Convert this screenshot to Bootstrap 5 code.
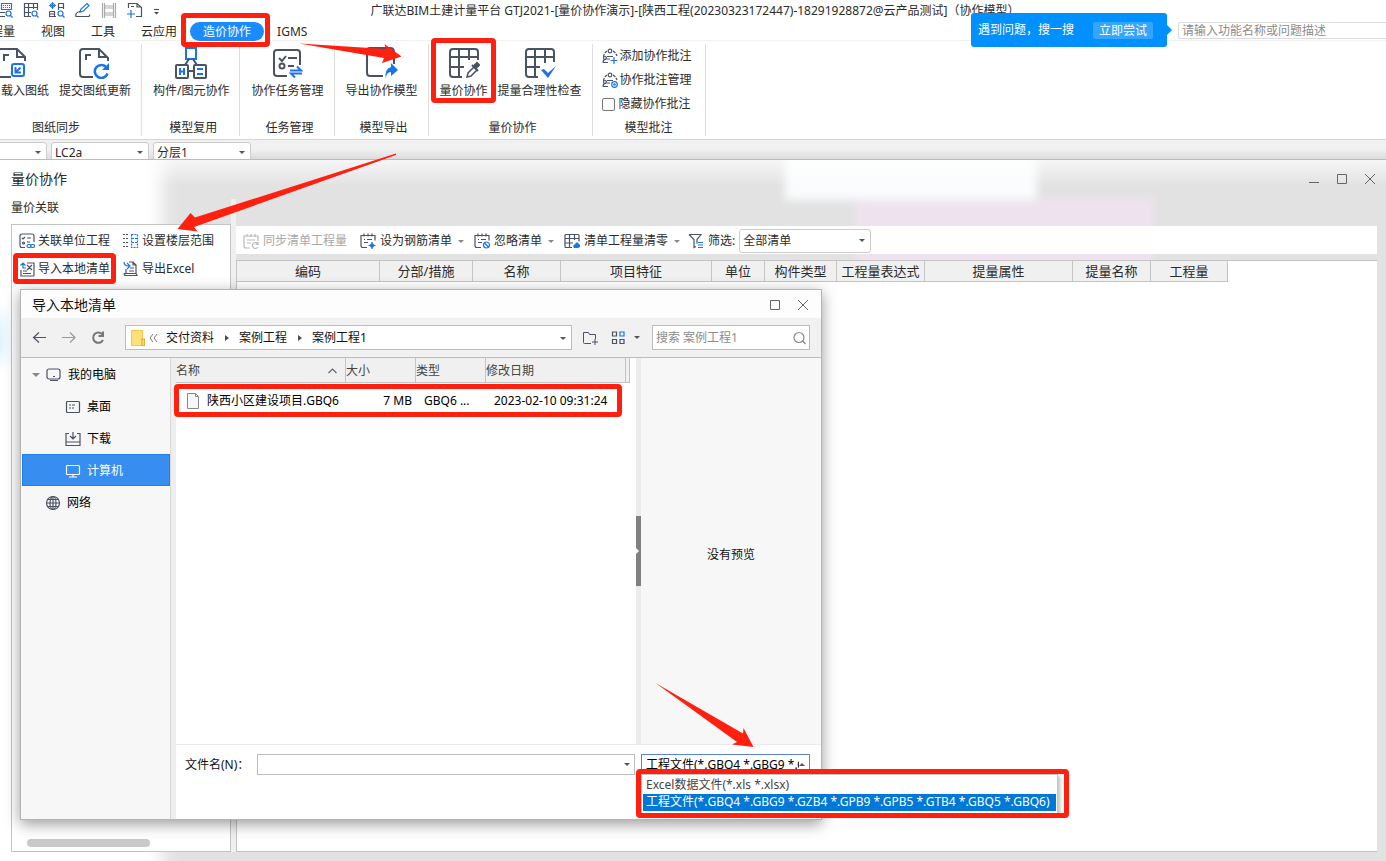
<!DOCTYPE html>
<html lang="zh-CN">
<head>
<meta charset="utf-8">
<meta name="viewport" content="width=device-width, initial-scale=1">
<title>量价协作</title>
<link href="https://cdn.jsdelivr.net/npm/bootstrap@5.3.0/dist/css/bootstrap.min.css" rel="stylesheet">
<style>
  :root { --red: #ff2010; --line: #bcbcbc; --ink: #2b2b2b; --slate: #4a5266; --blue: #1a73e8; }
  body { font: 12px/16px "Noto Sans", "Noto Sans CJK SC", sans-serif; color: var(--ink); background: #fff; overflow: hidden; }
  svg { display: block; flex: none; fill: none; stroke: var(--slate); stroke-width: 1.2; }
  svg .b { stroke: var(--blue); }
  svg .bf { fill: var(--blue); stroke: none; }
  button { font: inherit; color: inherit; background: none; border: 0; padding: 0; white-space: nowrap; }
  input, select { font: inherit; color: inherit; }
  .i16 { width: 16px; height: 16px; }
  .i32 { width: 32px; height: 32px; stroke-width: 2; }
  .caret { width: 0; height: 0; border: 3px solid transparent; border-top-color: #555; border-bottom: 0; flex: none; }

  /* red annotation frames */
  .marked { position: relative; }
  .marked::after { content: ""; position: absolute; border: 5px solid var(--red); border-radius: 4px; pointer-events: none; z-index: 5; }
  .arrows { position: absolute; left: 0; top: 0; width: 1386px; height: 861px; z-index: 30; pointer-events: none; fill: var(--red); stroke: none; }

  .title-row { display: grid; grid-template-columns: 1fr auto 1fr; height: 22px; align-items: center; }
  .quick { gap: 10px; margin-left: -3px; padding-bottom: 3px; }
  .tab-row { height: 19px; border-bottom: 1px solid #f0f0f0; }
  .tabs { margin-left: -34px; }
  .tabs button { height: 19px; padding: 0 13px; line-height: 18px; }
  .tabs .current { background: #1a8cff; color: #fff; border-radius: 10px; }
  .tabs .marked::after { inset: -9px -6px -6px -9px; }
  .help-input { width: 208px; height: 17px; border: 1px solid #dcdcdc; border-right: 0; border-radius: 2px 0 0 2px; padding: 0 3px; }
  .help-input::placeholder, .find::placeholder { color: #8c8c8c; opacity: 1; }
  .bubble { position: absolute; right: 219px; top: 13px; width: 196px; height: 34px; padding: 0 14px 0 7px; background: #0090ff; color: #fff; border-radius: 3px; z-index: 10; }
  .bubble::after { content: ""; position: absolute; left: 100%; top: 12px; border: 5px solid transparent; border-left-color: #0090ff; border-right: 0; }
  .bubble button { background: #33a6ff; border-radius: 2px; height: 17px; width: 60px; line-height: 17px; }

  .ribbon { height: 99px; border-bottom: 1px solid #d6d6d6; margin-left: -34px; }
  .group { border-right: 1px solid #dedede; height: 92px; margin-top: 3px; padding: 0 10px 0 11px; }
  .group-tools { gap: 10px; height: 75px; padding-top: 3px; }
  .group-name { padding-left: 4px; text-align: center; line-height: 18px; }
  .big { display: flex; flex-direction: column; align-items: center; gap: 4px; height: 54px; }
  .big.cut { width: 72px; }
  .big.cut span { align-self: flex-end; }
  .ribbon .marked::after { inset: -9px -8px -2px -9px; }
  .group.notes { padding: 0 13px 0 9px; }
  .note-list { gap: 8px; padding-top: 4px; }
  .note-list button, .note-list label { display: flex; align-items: center; gap: 2px; }
  .note-list input { appearance: none; width: 13px; height: 13px; border: 1px solid #777; border-radius: 2px; margin: 0 2px 0 0; }

  .floor-row { height: 19px; gap: 4px; padding-top: 2px; background: linear-gradient(#f1f1f1 50%, #dcdcdc); overflow: hidden; }
  .floor-row select, .filter-select, .type-select { appearance: none; border: 1px solid #ccc; border-radius: 3px; background: #fff url("data:image/svg+xml,%3Csvg xmlns='http://www.w3.org/2000/svg' width='6' height='4'%3E%3Cpath d='M0 0h6L3 3z' fill='%23555'/%3E%3C/svg%3E") no-repeat right 5px center; }
  .floor-row select { width: 98px; height: 22px; padding: 0 3px 1px; }
  .floor-row .first { margin-left: -51px; }

  .app-window { background: #e2e2e2; border-top: 1px solid var(--line); position: relative; z-index: 1; }
  .backdrop { position: absolute; inset: 0; overflow: hidden; z-index: -1; }
  .backdrop i { position: absolute; filter: blur(9px); background: #fff; }
  .backdrop .haze-left { left: -30px; top: -30px; width: 192px; bottom: -30px; }
  .backdrop .haze-blue { left: -30px; top: 155px; width: 36px; height: 45px; background: #dcf1ff; }
  .backdrop .haze-top { left: 785px; top: -10px; width: 252px; height: 50px; background: #fafcfd; filter: blur(5px); }
  .backdrop .haze-pink { left: 855px; top: 38px; width: 298px; height: 70px; background: #efe2ef; filter: blur(5px); }
  .backdrop .sheen { inset: 0 0 auto 0; height: 26px; filter: none; background: linear-gradient(#ffffffb0, #fff0); }
  .win-title { height: 38px; padding: 0 10px 1px 11px; }
  .win-title h1 { font-size: 14px; line-height: 20px; margin: 0; font-weight: 400; }
  .win-title svg, .dlg-title svg { width: 12px; height: 12px; stroke: #666; stroke-width: 1; }
  .win-buttons { gap: 16px; }
  .win-body { padding: 0 9px 9px 11px; }
  .left-col { width: 220px; }
  .left-col h2 { font-size: 12px; line-height: 20px; margin: 0 0 6px; font-weight: 400; }
  .left-box { border: 1px solid #c4c4c4; background: #fff; }
  .link-tools { display: grid; grid-template-columns: 104px 1fr; row-gap: 12px; padding: 8px 7px 0; }
  .link-tools button { display: flex; align-items: center; gap: 3px; justify-self: start; }
  .link-tools .marked::after { inset: -8px -6px -7px -6px; }
  .h-thumb { width: 123px; height: 8px; margin: auto 0 4px 15px; border-radius: 4px; background: #c9c9c9; }
  .splitter { width: 5px; background: #f0f0f0; margin-top: 1px; }
  .right-col { padding-top: 28px; min-width: 0; }
  .list-tools { height: 28px; background: #fff; padding: 2px 0 0 7px; margin-bottom: 6px; }
  .list-tools button { display: flex; align-items: center; gap: 4px; }
  .list-tools .off { color: #a8a8a8; margin-right: 13px; }
  .list-tools .off svg { stroke: #bbb; }
  .list-tools .caret { margin: 0 10px 0 6px; border-top-color: #888; }
  .filter-select { width: 132px; height: 24px; padding: 0 3px; }
  .sheet { border: 1px solid #c4c4c4; border-right: 0; background: #fff; }
  .sheet table { width: 991px; table-layout: fixed; border-collapse: separate; border-spacing: 0; }
  .sheet th { height: 21px; padding: 0; line-height: 18px; text-align: center; font-size: 13px; font-weight: 400; background: #f0f0f0; border: 1px solid #c4c4c4; border-width: 0 1px 1px 0; white-space: nowrap; }

  .dlg { position: absolute; left: 20px; top: 129px; width: 802px; height: 531px; border: 1px solid #b4b4b4; background: #fff; box-shadow: 0 4px 14px #0006; color: #111; }
  .dlg-title { height: 28px; padding: 1px 12px 0 11px; font-size: 14px; background: #fdfdfd; }
  .dlg-bar { height: 40px; background: #f1f1f1; border-bottom: 1px solid var(--line); padding: 0 11px; }
  .nav-buttons { gap: 13px; }
  .nav-buttons .fwd svg { stroke: #999; }
  .nav-buttons .again svg { stroke: #777; stroke-width: 2; }
  .address { width: 447px; height: 25px; border: 1px solid var(--line); background: #fff; padding: 1px 5px 0; margin-left: 19px; }
  .address .step { border: 3px solid transparent; border-left: 4px solid #444c60; border-right: 0; margin: 0 10px 0 11px; }
  .find-box { width: 158px; height: 25px; border: 1px solid var(--line); background: #fff; padding: 1px 2px 0 3px; }
  .find { border: 0; padding: 0; width: 135px; }
  .dlg-main { padding-left: 1px; background: #f7f7f7; }
  .places { width: 148px; }
  .places a { display: flex; align-items: center; gap: 6px; height: 32px; padding: 1px 0 0 23px; color: #000; text-decoration: none; }
  .places a.sub { padding-left: 43px; }
  .places a.root { padding-left: 10px; }
  .places .caret { border-width: 4px 4px 0; border-top-color: #888; }
  .places a.on { background: #388df0; outline: 1px solid #2080e8; outline-offset: -1px; color: #fff; }
  .places .on svg { stroke: #fff; }
  .side-split { width: 6px; background: #eee; border-left: 1px solid #d8d8d8; }
  .file-side { background: #fff; }
  .files { width: 460px; }
  .files table { width: 458px; table-layout: fixed; border-collapse: separate; border-spacing: 0; }
  .files th { height: 25px; padding: 1px 0 0; font-weight: 400; background: #f0f0f0; border: 1px solid #c4c4c4; border-width: 0 1px 1px 0; color: #444; }
  .files td { height: 35px; padding: 0; color: #000; white-space: nowrap; }
  .files .name-cell { padding-left: 10px; gap: 7px; }
  .files .marked::after { inset: 1px 12px 1px -2px; }
  .pane-split { width: 5px; background: #ececec; }
  .pane-split span { width: 5px; height: 70px; background: #808080; }
  .pane-split span::after { content: ""; border: 3px solid transparent; border-left-color: #fff; border-right: 0; }
  .preview { background: #f7f7f7; padding-top: 8px; }
  .dlg-foot { height: 75px; border-top: 1px solid #ebebeb; padding: 9px 11px 0 9px; }
  .dlg-foot label { line-height: 21px; }
  .name-box { width: 378px; height: 21px; border: 1px solid var(--line); padding: 0 4px 0 3px; margin: 0 6px 0 auto; }
  .name-box input { border: 0; outline: 0; padding: 0; background: none; }
  .type-select { width: 169px; height: 21px; padding: 0 10px 0 4px; border-color: #5c85d6; border-radius: 0; color: #000; background-image: url("data:image/svg+xml,%3Csvg xmlns='http://www.w3.org/2000/svg' width='6' height='4'%3E%3Cpath d='M0 3h6L3 0z' fill='%23555'/%3E%3C/svg%3E"); background-position: right 4px center; }
  .choices { position: absolute; left: 620px; top: 484px; width: 417px; padding: 2px 1px; background: #fff; border: 1px solid #c4c4c4; box-shadow: 2px 2px 4px #0004; list-style: none; margin: 0; white-space: nowrap; color: #444; }
  .choices.marked { position: absolute; }
  .choices li { height: 17px; line-height: 16px; padding-left: 3px; }
  .choices li[aria-selected=true] { background: #0078d7; color: #fff; }
  .choices.marked::after { inset: -6px -12px -5px -6px; }
</style>
</head>
<body>
<div class="d-flex flex-column min-vh-100 position-relative">

  <header class="title-row">
    <div class="quick d-flex align-items-center">
      <svg class="i16" viewBox="0 0 16 16"><path class="b" d="M4.500 1.500h10v6h-10z"/><path class="b" stroke-dasharray="1 1" d="M6 3.500h7M6 5.500h7"/><path d="M0 10v4.500h8M3 10.500h5"/><circle class="b" cx="11.500" cy="11.500" r="2.500"/><path class="b" d="M13.500 13.500l2 2"/></svg>
      <svg class="i16" viewBox="0 0 16 16"><path d="M8 14.500H1.500v-13h13V8M1 5.500h14M1 10.500h7M5.500 1v14M10.500 1v6"/><circle class="b" cx="11.500" cy="11.500" r="2.500"/><path class="b" d="M13.500 13.500l2 2"/></svg>
      <svg class="i16" viewBox="0 0 16 16"><path class="b" d="M0 3.500h7M3.500 0v7"/><circle class="b" cx="3.500" cy="3.500" r="2"/><path d="M9.500 1.500h5V7M9.500 1.500V8M9.500 5.500h5M.5 9.500v5H7M.5 12h5M5.500 9v5M.5 9.500h5"/><circle class="b" cx="11.500" cy="11.500" r="2.500"/><path class="b" d="M13.500 13.500l2 2"/></svg>
      <svg class="i16" viewBox="0 0 16 16"><path class="b" d="M5 10l1-3 6-5.500 2 2L8.500 9z"/><path d="M5 9.500q-5 1-4 5h13l1-2"/></svg>
      <svg class="i16" viewBox="0 0 16 16" style="stroke:#aaa"><path d="M3.500 1v15M1.500 1v15M12.500 1v15M14.500 1v15M3 4h10M3 6h10M3 11h10M3 13h10"/></svg>
      <svg class="i16" viewBox="0 0 16 16"><path d="M1.500 6V1.500H10l4.500 4v9H9M10 1.500V5h4M4 4.500h3"/><path class="b" d="M4 8v8M0 12h8"/></svg>
      <svg width="7" height="10" viewBox="0 0 7 10"><path d="M1 4.500h5"/><path d="M1 7h5L3.500 9.500z" fill="#444" stroke="none"/></svg>
    </div>
    <div class="text-nowrap ps-1">广联达BIM土建计量平台 GTJ2021-[量价协作演示]-[陕西工程(20230323172447)-18291928872@云产品测试]（协作模型）</div>
    <div></div>
  </header>

  <nav class="tab-row d-flex">
    <div class="tabs d-flex">
      <button type="button">工程量</button><button type="button">视图</button><button type="button">工具</button><button type="button">云应用</button><button type="button" class="current marked">造价协作</button><button type="button">IGMS</button>
    </div>
    <input class="help-input ms-auto" type="text" aria-label="功能搜索" placeholder="请输入功能名称或问题描述">
  </nav>
  <div class="bubble d-flex align-items-center justify-content-between"><span>遇到问题，搜一搜</span><button type="button">立即尝试</button></div>

  <section class="ribbon d-flex">
    <div class="group">
      <div class="group-tools d-flex">
        <button type="button" class="big cut"><svg class="i32" viewBox="0 0 32 32"><path d="M14 30H4q-3 0-3-3V5q0-3 3-3h16l8 8v4M20 2v8h8M7 14V8h5"/><rect class="b" x="15" y="17" width="12" height="12" rx="2"/><path class="b" d="M23.500 20.500L19 25M18.500 20v5.500H24"/></svg><span>载入图纸</span></button>
        <button type="button" class="big"><svg class="i32" viewBox="0 0 32 32"><path d="M14 30H4q-3 0-3-3V5q0-3 3-3h16l9 9v3M20 2v8h8M7 13V8h5"/><path class="b" stroke-width="2.500" d="M27.500 20.500a6.500 6.500 0 1 0 1 6"/><path class="bf" d="M30 16v7h-7z"/></svg><span>提交图纸更新</span></button>
      </div>
      <div class="group-name">图纸同步</div>
    </div>
    <div class="group">
      <div class="group-tools d-flex">
        <button type="button" class="big"><svg class="i32" viewBox="0 0 32 32"><rect class="b" x="11" y="1" width="10" height="11"/><path d="M14 12l-4 6M18 12l4 6M14 24h4"/><rect x="1" y="18" width="12" height="13" rx="1"/><rect x="19" y="18" width="12" height="13" rx="1"/><path class="b" d="M5 21v7M9 21v7M5 24.500h4M22 22h6M22 27h6"/></svg><span>构件/图元协作</span></button>
      </div>
      <div class="group-name">模型复用</div>
    </div>
    <div class="group">
      <div class="group-tools d-flex">
        <button type="button" class="big"><svg class="i32" viewBox="0 0 32 32"><path d="M16 29H6q-3 0-3-3V6q0-3 3-3h20q3 0 3 3v12M8 11l3 3 4-5M17 11h9M17 19h6"/><circle cx="11" cy="19" r="2.500"/><path class="b" d="M19 23.500h11l-4-4M31 26.500H20l4 4"/></svg><span>协作任务管理</span></button>
      </div>
      <div class="group-name">任务管理</div>
    </div>
    <div class="group">
      <div class="group-tools d-flex">
        <button type="button" class="big"><svg class="i32" viewBox="0 0 32 32"><path d="M17 29H4q-3 0-3-3V4q0-3 3-3h20q4 0 4 4v12"/><path class="bf" d="M20 32q-2-10 5-12v-4l7 7-7 6v-4q-5 0-5 7z"/></svg><span>导出协作模型</span></button>
      </div>
      <div class="group-name">模型导出</div>
    </div>
    <div class="group">
      <div class="group-tools d-flex">
        <button type="button" class="big marked"><svg class="i32" viewBox="0 0 32 32"><path d="M14 30H5q-3 0-3-3V5q0-3 3-3h22q3 0 3 3v8M2 10h28M2 20h14M11 2v28M21 2v11"/><path d="M19 30l1-4 6-6 3 3-6 6z" stroke-width="1.500"/><path d="M24 18l6 6M26 19l3-3 2 2-3 3z" fill="#4a5266"/></svg><span>量价协作</span></button>
        <button type="button" class="big"><svg class="i32" viewBox="0 0 32 32"><path d="M14 30H5q-3 0-3-3V5q0-3 3-3h22q3 0 3 3v10M2 10h28M2 20h14M11 2v28M21 2v14"/><path class="bf" d="M17 23l3-1 4 4 8-7-8 12z"/></svg><span>提量合理性检查</span></button>
      </div>
      <div class="group-name">量价协作</div>
    </div>
    <div class="group notes">
      <div class="group-tools note-list d-flex flex-column">
        <button type="button"><svg class="i16" viewBox="0 0 16 16" stroke-width="1"><circle cx="8" cy="3" r="1.800"/><path stroke-dasharray="3 1" d="M5 3Q2 5 1.500 9M11 3q3 2 4 5"/><path d="M1 14.500h5M1 14.500q0-3 3-3.500M5 8.500h6M5 11h3"/><circle cx="3" cy="10" r="1.500"/><path class="b" d="M12 9v7M8.500 12.500h7"/></svg>添加协作批注</button>
        <button type="button"><svg class="i16" viewBox="0 0 16 16" stroke-width="1"><circle cx="8" cy="3" r="1.800"/><path stroke-dasharray="3 1" d="M5 3Q2 5 1.500 9M11 3q3 2 4 5"/><path d="M1 14.500h5M1 14.500q0-3 3-3.500M5 8.500h6M5 11h3"/><circle cx="3" cy="10" r="1.500"/><circle class="b" cx="12.500" cy="12.500" r="2.800"/><circle class="b" cx="12.500" cy="12.500" r=".7"/></svg>协作批注管理</button>
        <label><input type="checkbox">隐藏协作批注</label>
      </div>
      <div class="group-name">模型批注</div>
    </div>
  </section>

  <div class="floor-row d-flex">
    <select class="first" aria-label="构件类型"><option></option></select>
    <select aria-label="构件"><option>LC2a</option></select>
    <select aria-label="分层"><option>分层1</option></select>
  </div>

  <main class="app-window flex-fill d-flex flex-column">
    <div class="backdrop"><i class="haze-left"></i><i class="haze-blue"></i><i class="haze-pink"></i><i class="haze-top"></i><i class="sheen"></i></div>
    <div class="win-title d-flex align-items-center justify-content-between">
      <h1>量价协作</h1>
      <div class="win-buttons d-flex">
        <button type="button" aria-label="最小化"><svg viewBox="0 0 12 12"><path d="M1 9.500h10"/></svg></button>
        <button type="button" aria-label="最大化"><svg viewBox="0 0 12 12"><path d="M1.500 1.500h9v9h-9z"/></svg></button>
        <button type="button" aria-label="关闭"><svg viewBox="0 0 12 12"><path d="M1 1l10 10M11 1L1 11"/></svg></button>
      </div>
    </div>

    <div class="win-body flex-fill d-flex">
      <div class="left-col d-flex flex-column">
        <h2>量价关联</h2>
        <div class="left-box flex-fill d-flex flex-column">
          <div class="link-tools">
            <button type="button"><svg class="i16" viewBox="0 0 16 16"><path d="M6 14.500H3q-2 0-2-2V3q0-2 2-2h10q2 0 2 2v6M3 5l1 1 2-2M8 5h4M8 9h3"/><circle cx="4.500" cy="10" r="1"/><rect class="b" x="8" y="11.500" width="4" height="3" rx="1.500"/><rect class="b" x="11.500" y="11.500" width="4" height="3" rx="1.500"/></svg>关联单位工程</button>
            <button type="button"><svg class="i16" viewBox="0 0 16 16"><path stroke-dasharray="2 1" d="M0 1.500h6M0 5.500h6M0 9.500h6M0 13.500h6"/><path class="b" stroke-dasharray="2 1" d="M8.500 1.500h6v13h-6zM9 5.500h6M9 9.500h6"/></svg><span>设置楼层范围</span></button>
            <button type="button" class="marked"><svg class="i16" viewBox="0 0 16 16"><path d="M8 2h7v9M15 9v5q0 1-1 1H2V9M4 10h4M4 12.500h8M8 4l5 5M13 4L8 9"/><path class="b" d="M7 7H4V2M1.500 4.500L4 2l2.500 2.500"/></svg>导入本地清单</button>
            <button type="button"><svg class="i16" viewBox="0 0 16 16"><path d="M3 8v5M6 1h4l3 3v9M10 1v3h3M7 7h4M6 10h5M1 12.500h11q2 0 2 2H3q-2 0-2-2"/><path class="b" d="M1 1q0 4 5 4M4 2l3 3-3 3"/></svg><span>导出Excel</span></button>
          </div>
          <div class="h-thumb"></div>
        </div>
      </div>
      <div class="splitter"></div>
      <div class="right-col flex-fill d-flex flex-column">
        <div class="list-tools d-flex align-items-center">
          <button type="button" class="off" disabled><svg class="i16" viewBox="0 0 16 16"><path d="M7 15H3q-2 0-2-2V3h14v5M4 1v3M8 1v3M12 1v3M4 7h8M4 10h4"/><path d="M15 11a3 3 0 1 0 0 3M15 9v2.500h-2.500"/></svg>同步清单工程量</button>
          <button type="button"><svg class="i16" viewBox="0 0 16 16"><path d="M7 14.500H3q-2 0-2-2V2.500h14v5M4 .5v3M8 .5v3M12 .5v3M4 6.500h1M7 6.500h5M4 9.500h4"/><path class="b" d="M12 9v7M8.500 12.500h7"/><path class="b" d="M12 10.500l2 2-2 2-2-2z"/></svg>设为钢筋清单</button><span class="caret"></span>
          <button type="button"><svg class="i16" viewBox="0 0 16 16"><path d="M7 14.500H3q-2 0-2-2V2.500h14v5M4 .5v3M8 .5v3M12 .5v3M4 6.500h1M7 6.500h5M4 9.500h4"/><circle class="b" cx="12.500" cy="12" r="3"/><path class="b" d="M10.500 10l4 4"/></svg>忽略清单</button><span class="caret"></span>
          <button type="button"><svg class="i16" viewBox="0 0 16 16"><path d="M8 14.500H2q-1 0-1-1v-11q0-1 1-1h12q1 0 1 1v6M1 5.500h14M1 10h8M5.500 2v13M10.500 2v5"/><path class="bf" d="M9 13l4-4 3 3v2l-2 1h-4z"/></svg>清单工程量清零</button><span class="caret me-2"></span>
          <svg class="i16" viewBox="0 0 16 16"><path d="M1 1.500h12L9 6.500v4M1 1.500l5 5v8l2-1"/><path class="b" d="M10 9.500h5M10 12h5M10 14.500h5"/></svg>
          <label for="flt" class="ps-1 pe-1">筛选:</label>
          <select id="flt" class="filter-select"><option>全部清单</option></select>
        </div>
        <div class="sheet flex-fill">
          <table>
            <colgroup><col style="width:143px"><col style="width:93px"><col style="width:88px"><col style="width:151px"><col style="width:53px"><col style="width:72px"><col style="width:88px"><col style="width:148px"><col style="width:78px"><col style="width:77px"></colgroup>
            <thead><tr><th>编码</th><th>分部/措施</th><th>名称</th><th>项目特征</th><th>单位</th><th>构件类型</th><th>工程量表达式</th><th>提量属性</th><th>提量名称</th><th>工程量</th></tr></thead>
          </table>
        </div>
      </div>
    </div>

    <section class="dlg d-flex flex-column" role="dialog" aria-label="导入本地清单">
      <div class="dlg-title d-flex align-items-center justify-content-between">
        <span>导入本地清单</span>
        <div class="win-buttons d-flex">
          <button type="button" aria-label="最大化"><svg viewBox="0 0 12 12"><path d="M1.500 1.500h9v9h-9z"/></svg></button>
          <button type="button" aria-label="关闭"><svg viewBox="0 0 12 12"><path d="M1 1l10 10M11 1L1 11"/></svg></button>
        </div>
      </div>
      <div class="dlg-bar d-flex align-items-center">
        <div class="nav-buttons d-flex">
          <button type="button" aria-label="后退"><svg class="i16" viewBox="0 0 16 16"><path d="M14 7.500H1.500M7 2.500l-5.500 5 5.500 5"/></svg></button>
          <button type="button" class="fwd" aria-label="前进"><svg class="i16" viewBox="0 0 16 16"><path d="M1 7.500h13M9 2.500l5 5-5 5"/></svg></button>
          <button type="button" class="again" aria-label="刷新"><svg class="i16" viewBox="0 0 16 16"><path d="M12.500 4.500a5.200 5.200 0 1 0 .5 5.500M13 1.500V6H8.500"/></svg></button>
        </div>
        <div class="address d-flex align-items-center">
          <svg width="14" height="16" viewBox="0 0 14 16"><path d="M.5.500h11v15H.5z" fill="#ffe07a" stroke="#f2cb4e"/><path d="M11 9h2.500v6.500H11z" fill="#ffe07a" stroke="#e0b030"/></svg>
          <svg class="ms-1 me-2" width="9" height="10" viewBox="0 0 9 10" style="stroke:#777;stroke-width:1"><path d="M4 1L1 5l3 4M8 1L5 5l3 4"/></svg>
          <span>交付资料</span><span class="step"></span><span>案例工程</span><span class="step"></span><span>案例工程1</span><span class="caret ms-auto"></span>
        </div>
        <button type="button" class="ms-auto" aria-label="新建文件夹"><svg class="i16" viewBox="0 0 16 16"><path d="M9 13.500H2.500q-1 0-1-1v-10h5l1 2h6V9M10 12h6M13 9v6" stroke-width="1"/></svg></button>
        <button type="button" class="ms-2 me-2 ps-1 d-flex align-items-center gap-2" aria-label="视图"><svg class="i16" viewBox="0 0 16 16"><path d="M2.500 2h4v4h-4zM2.500 9.500h4v4h-4zM10 9.500h4v4h-4z"/><path class="b" d="M10 2h4v4h-4z"/></svg><span class="caret"></span></button>
        <div class="find-box d-flex align-items-center ms-1">
          <input class="find" type="text" aria-label="搜索" placeholder="搜索 案例工程1">
          <svg class="i16" viewBox="0 0 16 16" style="stroke:#888"><circle cx="8" cy="7.500" r="5"/><path d="M11.500 11l3 3"/></svg>
        </div>
      </div>
      <div class="dlg-main d-flex flex-fill">
        <div class="places">
          <a href="#" class="root"><span class="caret"></span><svg class="i16" viewBox="0 0 16 16"><rect x="1" y="2" width="13" height="10" rx="2"/><path d="M4 13.500h8M7 9.500h2"/></svg>我的电脑</a>
          <a href="#" class="sub"><svg class="i16" viewBox="0 0 16 16"><rect x="1.500" y="2.500" width="13" height="11" rx="1"/><path d="M4 6h2M7 6h3M4 9h2M7 9h2"/></svg>桌面</a>
          <a href="#" class="sub"><svg class="i16" viewBox="0 0 16 16"><path d="M4 2.500H1v12h14v-12h-3M8 1v7M5 5l3 3 3-3M1 11h14"/></svg>下载</a>
          <a href="#" class="sub on"><svg class="i16" viewBox="0 0 16 16"><rect x="1.500" y="2.500" width="13" height="9" rx="1"/><path d="M4 14h8M8 12v2"/></svg>计算机</a>
          <a href="#"><svg class="i16" viewBox="0 0 16 16"><circle cx="8" cy="8" r="6.500"/><ellipse cx="8" cy="8" rx="3" ry="6.500"/><path d="M1.500 8h13M8 1.500v13M2.500 4.500h11M2.500 11.500h11"/></svg>网络</a>
        </div>
        <div class="side-split"></div>
        <div class="file-side flex-fill d-flex flex-column">
          <div class="flex-fill d-flex">
            <div class="files">
              <table>
                <colgroup><col style="width:170px"><col style="width:70px"><col style="width:70px"><col style="width:140px"><col></colgroup>
                <thead><tr><th><span class="d-flex align-items-center justify-content-between pe-2">名称<svg width="9" height="6" viewBox="0 0 9 6" style="stroke:#666"><path d="M.5 5l4-4 4 4"/></svg></span></th><th>大小</th><th>类型</th><th>修改日期</th><th></th></tr></thead>
                <tbody><tr class="marked"><td><span class="name-cell d-flex align-items-center"><svg width="14" height="16" viewBox="0 0 14 16" style="stroke:#888;stroke-width:1"><path d="M1.500.500h8l3 3v12h-11zM9.500.500v3h3" fill="#f7f7f7"/></svg>陕西小区建设项目.GBQ6</span></td><td class="text-end pe-1">7 MB</td><td class="ps-2">GBQ6 ...</td><td class="ps-2">2023-02-10 09:31:24</td><td></td></tr></tbody>
              </table>
            </div>
            <div class="pane-split d-flex align-items-center"><span class="d-flex align-items-center"></span></div>
            <div class="preview flex-fill d-flex align-items-center justify-content-center">没有预览</div>
          </div>
          <div class="dlg-foot d-flex align-items-start">
            <label for="fname">文件名(N)：</label>
            <div class="name-box d-flex align-items-center"><input id="fname" class="flex-fill" type="text"><span class="caret"></span></div>
            <select class="type-select" aria-label="文件类型"><option>工程文件(*.GBQ4 *.GBG9 *.GZB4)</option></select>
          </div>
        </div>
      </div>
      <ul class="choices marked" role="listbox" aria-label="文件类型">
        <li role="option">Excel数据文件(*.xls *.xlsx)</li>
        <li role="option" aria-selected="true">工程文件(*.GBQ4 *.GBG9 *.GZB4 *.GPB9 *.GPB5 *.GTB4 *.GBQ5 *.GBQ6)</li>
      </ul>
    </section>
  </main>

  <svg class="arrows" viewBox="0 0 1386 861" aria-hidden="true">
    <path d="M299 43.500L386 49 384.500 44 401.500 56.500 382 63 384 58z"/>
    <path d="M396 153.500L195 217.500 190.500 213 177.500 229 197.500 231.500 194 227 396 155z"/>
    <path d="M655.500 683L743 733.500 743.500 728 753.500 747 732 744.500 737 742z"/>
  </svg>
</div>
<script src="https://cdn.jsdelivr.net/npm/bootstrap@5.3.0/dist/js/bootstrap.bundle.min.js"></script>
</body>
</html>
